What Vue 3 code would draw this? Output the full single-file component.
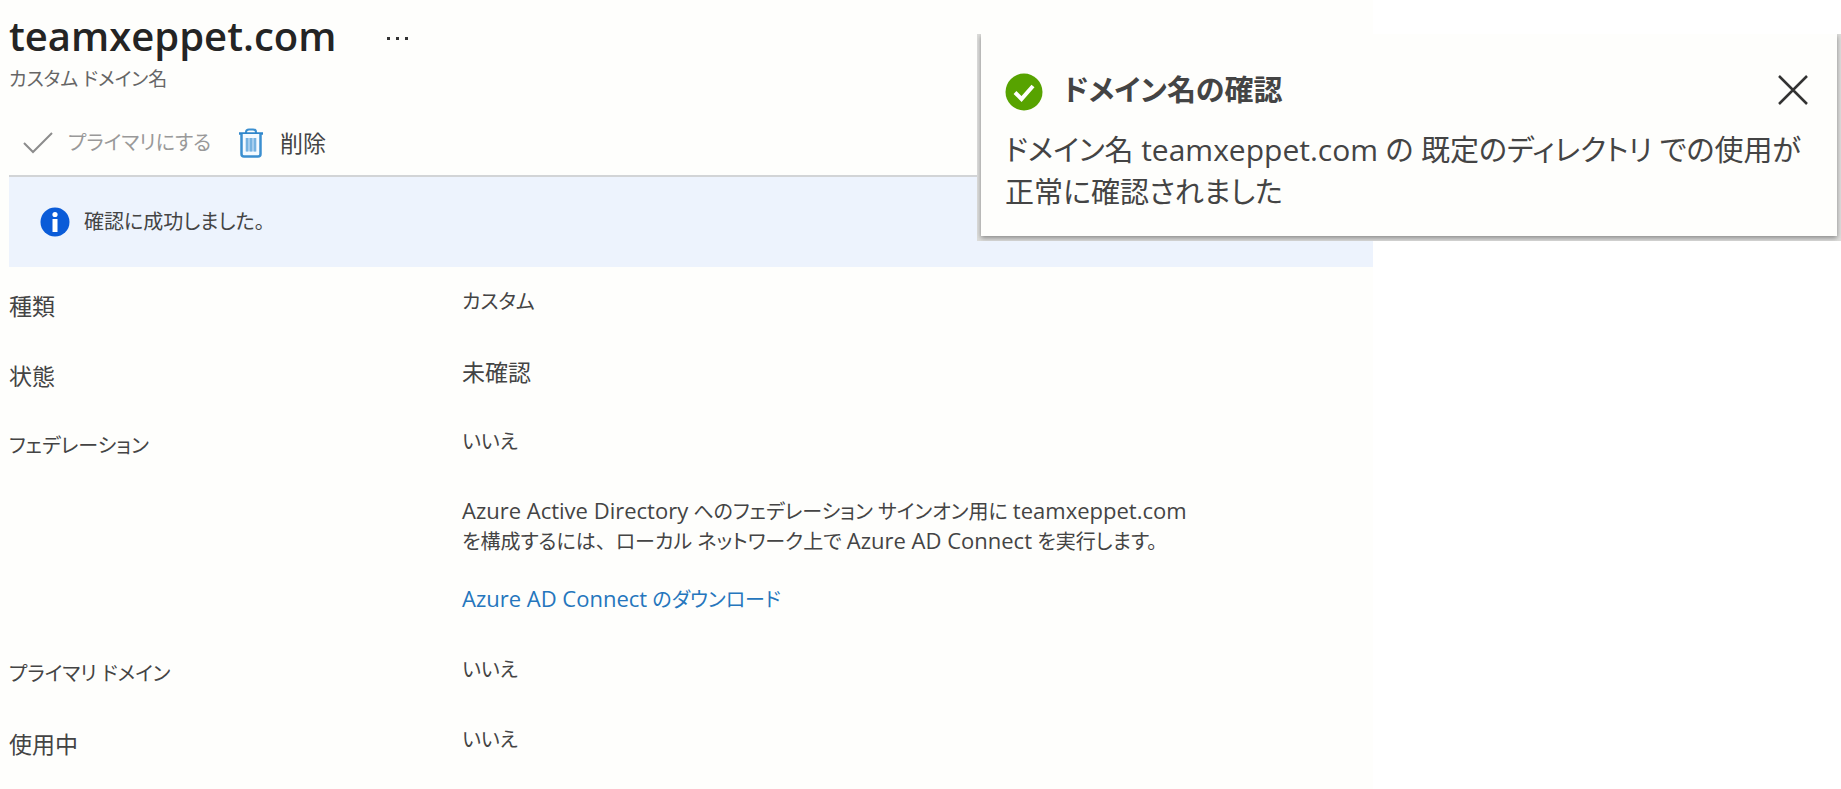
<script setup>
import { ref } from 'vue'

const domain = 'teamxeppet.com'
const toastOpen = ref(true)
</script>

<template>
  <div class="screen">
    <main class="blade">
      <header class="heading">
        <div class="title-row">
          <h1>{{ domain }}</h1>
          <button class="more" type="button" aria-label="その他">
            <svg width="24" height="8" viewBox="0 0 24 8" fill="#333"><rect x="1" y="5" width="3" height="3" /><rect x="10" y="5" width="3" height="3" /><rect x="19" y="5" width="3" height="3" /></svg>
          </button>
        </div>
        <p class="subtitle">カスタム ドメイン名</p>
      </header>

      <div class="toolbar">
        <button class="command" type="button" disabled>
          <svg width="30" height="22" viewBox="0 0 30 22" fill="none" stroke="#8c8c8c" stroke-width="2"><path d="M1 11 10 20 29 1" /></svg>
          <span>プライマリにする</span>
        </button>
        <button class="command delete" type="button">
          <svg width="24" height="30" viewBox="0 0 24 30" fill="none">
            <path d="M7 5V4C7 2.300 8.300 1.500 10 1.500h4C15.700 1.500 17 2.300 17 4v1" stroke="#3b8fd0" stroke-width="2" />
            <path d="M0 5.500h24" stroke="#2f86cb" stroke-width="2.500" />
            <path d="M2.500 6v20q0 2.500 2.500 2.500h14q2.500 0 2.500-2.500V6" fill="#f4faff" stroke="#3b8fd0" stroke-width="2.500" />
            <path d="M6.500 10h11v13.500h-11z" fill="#a5cdee" />
            <path d="M8 10v13.500M12 10v13.500M16 10v13.500" stroke="#67a9dc" stroke-width="1.500" />
          </svg>
          <span class="kanji">削除</span>
        </button>
      </div>

      <div class="banner" role="status">
        <svg width="30" height="30" viewBox="0 0 30 30"><circle cx="15" cy="15" r="14.500" fill="#0a5bd8" /><circle cx="15" cy="7.500" r="2.600" fill="#fff" /><path d="M12.500 12h5v13h-5z" fill="#fff" /></svg>
        <span>確認に成功しました。</span>
      </div>

      <table class="details">
        <tbody>
          <tr><th scope="row" class="kanji">種類</th><td>カスタム</td></tr>
          <tr><th scope="row" class="kanji">状態</th><td class="kanji">未確認</td></tr>
          <tr>
            <th scope="row">フェデレーション</th>
            <td>
              <p>いいえ</p>
              <p class="note"><span class="latin">Azure Active Directory</span> へのフェデレーション サインオン用に <span class="latin">{{ domain }}</span><br>を構成するには<span class="comma">、</span>ローカル ネットワーク上で <span class="latin">Azure AD Connect</span> を実行します。</p>
              <a href="#download"><span class="latin">Azure AD Connect</span> のダウンロード</a>
            </td>
          </tr>
          <tr><th scope="row">プライマリ ドメイン</th><td>いいえ</td></tr>
          <tr><th scope="row" class="kanji">使用中</th><td>いいえ</td></tr>
        </tbody>
      </table>
    </main>

    <aside v-if="toastOpen" class="toast" role="alert">
      <div class="toast-card">
        <div class="toast-head">
          <svg class="toast-icon" width="38" height="38" viewBox="0 0 38 38"><circle cx="19" cy="19" r="18.500" fill="#57a300" /><path d="M10 19.500 16.500 26 28 13" fill="none" stroke="#fff" stroke-width="4" /></svg>
          <h2>ドメイン名の確認</h2>
          <button class="close" type="button" aria-label="閉じる" @click="toastOpen = false">
            <svg width="30" height="30" viewBox="0 0 30 30" stroke="#333" stroke-width="2.500"><path d="M1 1 29 29M29 1 1 29" /></svg>
          </button>
        </div>
        <p class="toast-text">ドメイン名 <span class="latin">{{ domain }}</span> の 既定のディレクトリ での使用が<br>正常に確認されました</p>
      </div>
    </aside>
  </div>
</template>

<style>
body {
  background: #fff;
}
</style>

<style scoped>
.screen {
  position: relative;
  min-height: 100vh;
  display: flex;
  font-family: "Open Sans", "Noto Sans CJK JP", sans-serif;
  font-feature-settings: "palt";
  font-size: 20px;
  line-height: 30px;
  color: #444;
}
h1, h2, p {
  margin: 0;
}
button {
  padding: 0;
  border: 0;
  background: none;
  font: inherit;
  font-feature-settings: inherit;
  color: inherit;
  display: flex;
  align-items: center;
}
svg {
  display: block;
  flex: none;
}
.blade {
  box-sizing: border-box;
  width: calc(100% - 468px);
  padding: 7px 0 0 9px;
  background: #fefefc;
}
.title-row {
  display: flex;
  align-items: center;
  gap: 50px;
}
h1 {
  font-size: 40px;
  line-height: 57px;
  font-weight: 600;
  color: #242424;
}
.subtitle {
  font-size: 19px;
  color: #666;
}
.toolbar {
  display: flex;
  align-items: center;
  gap: 28px;
  height: 64px;
  margin-top: 17px;
  padding-left: 14px;
  border-bottom: 2px solid #d2d4d6;
}
.command {
  gap: 15px;
}
.command:disabled {
  color: #999;
}
.delete {
  gap: 17px;
}
.banner {
  display: flex;
  align-items: center;
  gap: 14px;
  height: 90px;
  padding-left: 31px;
  background: #edf3fd;
}
.details {
  width: 100%;
  border-collapse: collapse;
}
th, td {
  padding: 20px 0;
  text-align: left;
  vertical-align: top;
  font-weight: 400;
}
th {
  width: 453px;
  padding: 24px 0 16px;
}
.kanji {
  font-size: 23px;
}
.latin {
  font-size: 22px;
  line-height: 1;
}
.comma {
  font-feature-settings: normal;
}
.note {
  margin: 40px 0 28px;
}
a {
  display: block;
  color: #2576bd;
  text-decoration: none;
}
.toast {
  position: absolute;
  top: 34px;
  right: 0;
  width: 864px;
  max-width: 100%;
  box-sizing: border-box;
  padding: 0 4px 5px;
  overflow: hidden;
  background: #dededc;
}
.toast-card {
  padding: 35px 29px 23px 24px;
  background: #fefefc;
  box-shadow: 0 2px 5px #888;
}
.toast-head {
  display: flex;
  align-items: center;
  gap: 20px;
  height: 42px;
  margin-bottom: 18px;
}
.toast-icon {
  align-self: flex-end;
}
h2 {
  flex: 1;
  font-size: 29px;
  line-height: 42px;
  font-weight: 600;
}
.toast-text {
  font-size: 29px;
  line-height: 42px;
}
.toast-text .latin {
  font-size: 30px;
}
</style>
